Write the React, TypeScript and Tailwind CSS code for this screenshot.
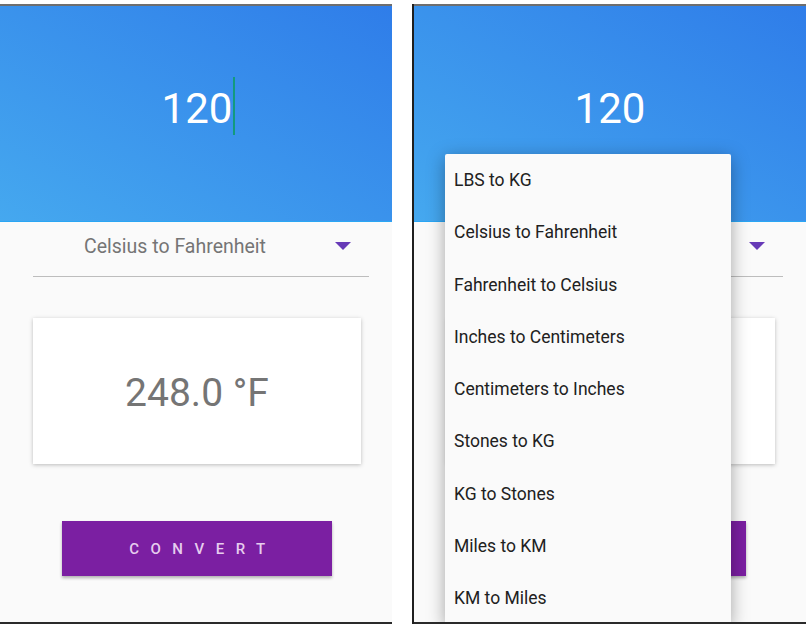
import React from "react";

const options = [
  "LBS to KG",
  "Celsius to Fahrenheit",
  "Fahrenheit to Celsius",
  "Inches to Centimeters",
  "Centimeters to Inches",
  "Stones to KG",
  "KG to Stones",
  "Miles to KM",
  "KM to Miles",
];

type ScreenProps = {
  showCursor?: boolean;
  menuOpen?: boolean;
};

const Screen = ({ showCursor, menuOpen }: ScreenProps) => {
  return (
    <div className="relative flex h-[620px] w-full flex-col overflow-hidden border-t-2 border-b-2 border-t-[#6e6e6e] border-b-[#2a2a2a] bg-[#fafafa]">
      {/* header with the input */}
      <div className="h-[216px] shrink-0 border-b border-[#2aa6f4] bg-[linear-gradient(to_top_right,#45a8ef,#2f7de9)] pt-[71px]">
        <div className={`flex items-start justify-center ${showCursor ? "pl-[5px]" : ""}`}>
          <span className="mt-[11px] text-[42px] leading-[42px] text-white">120</span>
          {showCursor && <span className="ml-[1px] h-[58px] w-[2px] bg-[#139a7e]" />}
        </div>
      </div>

      {/* spinner */}
      <div className="ml-[33px] flex h-[55px] w-[336px] shrink-0 items-center border-b border-[#bdbdbd] pb-[4px]">
        <span className="flex-1 text-center text-[19.5px] text-[#757575]">Celsius to Fahrenheit</span>
        <span className="flex w-[52px] justify-center pb-[2px]">
          <svg width="16" height="8" viewBox="0 0 16 8">
            <path d="M0 0 L16 0 L8 8 Z" fill="#673ab7" />
          </svg>
        </span>
      </div>

      {/* result card */}
      <div className="ml-[33px] mt-[41px] flex h-[146px] w-[328px] shrink-0 items-center justify-center bg-white pt-[4px] shadow-[0_1px_4px_rgba(0,0,0,0.25)]">
        <span className="text-[39px] text-[#757575]">248.0 °F</span>
      </div>

      {/* convert button */}
      <div className="ml-[62px] mt-[57px] flex h-[55px] w-[270px] shrink-0 items-center justify-center bg-[#7b1fa2] pl-[12px] pt-[2px] shadow-[0_2px_3px_rgba(0,0,0,0.3)]">
        <span className="text-[15px] font-medium tracking-[11.5px] text-[#e6cdee]">CONVERT</span>
      </div>

      {menuOpen && (
        <div className="absolute left-[31px] top-[148px] w-[286px] rounded-[2px] bg-[#fafafa] shadow-[0_4px_18px_rgba(0,0,0,0.35)]">
          {options.map((o) => (
            <div key={o} className="flex h-[52.25px] items-center pl-[9px] text-[17.5px] text-[#212121]">
              {o}
            </div>
          ))}
        </div>
      )}
    </div>
  );
};

const App = () => {
  return (
    <div className="flex h-[624px] w-[806px] bg-white pt-[4px] font-['Roboto',sans-serif]">
      <div className="w-[392px]">
        <Screen showCursor />
      </div>
      <div className="ml-[20px] w-[394px] border-l-2 border-[#1f1f1f]">
        <Screen menuOpen />
      </div>
    </div>
  );
};

export default App;
